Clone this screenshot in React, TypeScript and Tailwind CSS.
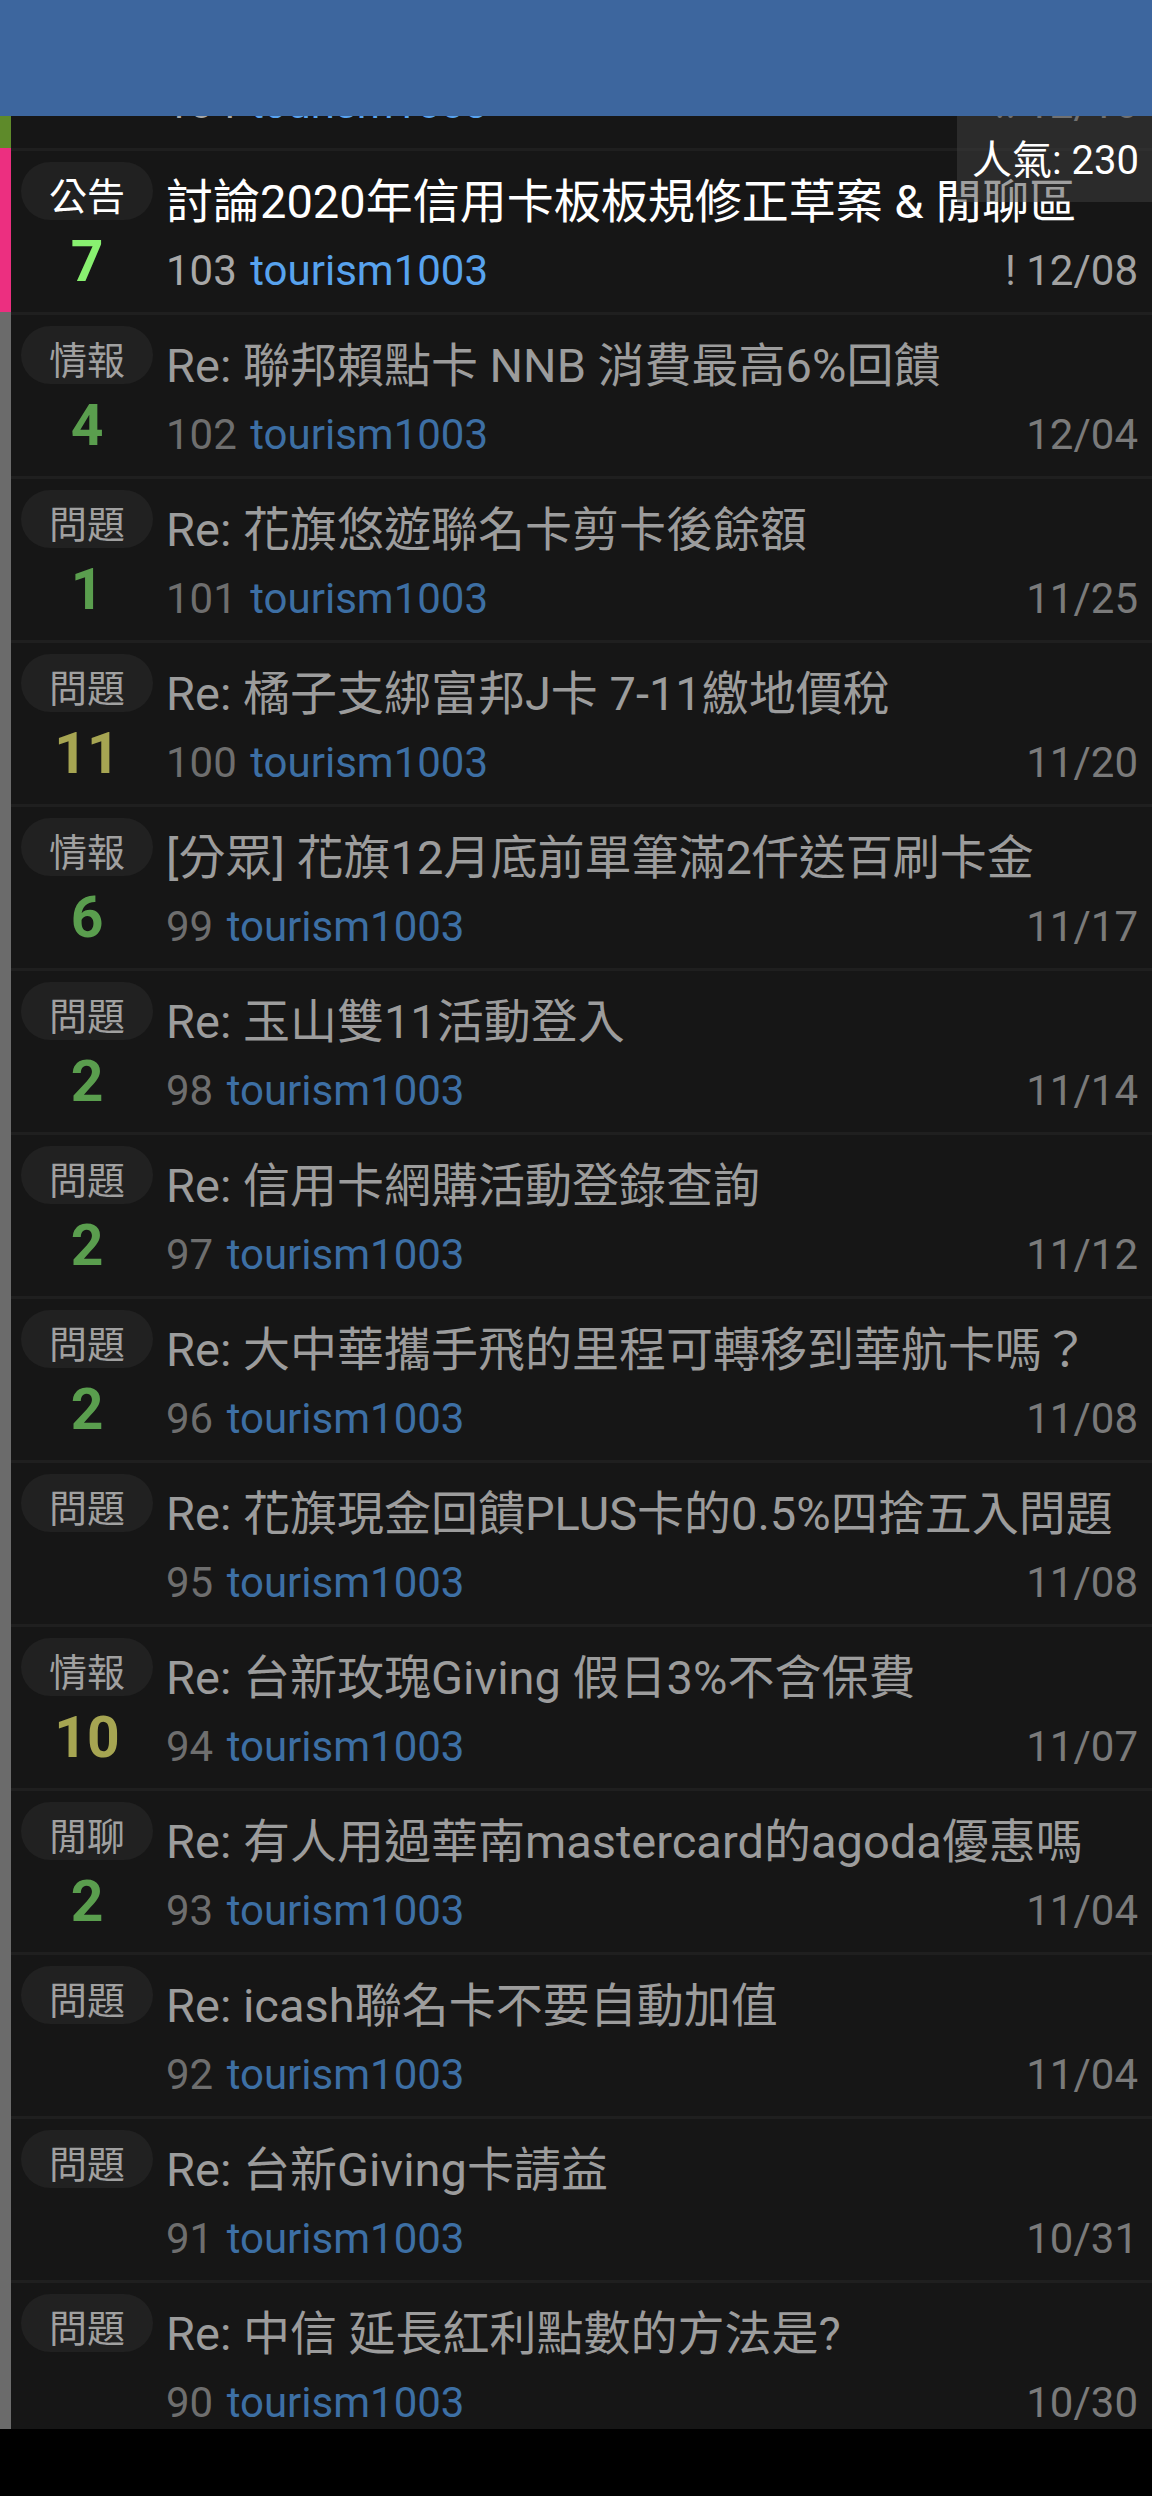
type Post = {
  tag?: string;
  count?: string;
  countColor?: string;
  title: string;
  no: string;
  date: string;
  unread?: boolean;
  strip: string;
};

const posts: Post[] = [
  { tag: "公告", count: "7", countColor: "text-[#88f070]", title: "討論2020年信用卡板板規修正草案 & 閒聊區", no: "103", date: "! 12/08", unread: true, strip: "bg-[#ec2f80]" },
  { tag: "情報", count: "4", countColor: "text-[#5a9e4e]", title: "Re: 聯邦賴點卡 NNB 消費最高6%回饋", no: "102", date: "12/04", strip: "bg-[#6b6b6b]" },
  { tag: "問題", count: "1", countColor: "text-[#5a9e4e]", title: "Re: 花旗悠遊聯名卡剪卡後餘額", no: "101", date: "11/25", strip: "bg-[#6b6b6b]" },
  { tag: "問題", count: "11", countColor: "text-[#a6a552]", title: "Re: 橘子支綁富邦J卡 7-11繳地價稅", no: "100", date: "11/20", strip: "bg-[#6b6b6b]" },
  { tag: "情報", count: "6", countColor: "text-[#5a9e4e]", title: "[分眾] 花旗12月底前單筆滿2仟送百刷卡金", no: "99", date: "11/17", strip: "bg-[#6b6b6b]" },
  { tag: "問題", count: "2", countColor: "text-[#5a9e4e]", title: "Re: 玉山雙11活動登入", no: "98", date: "11/14", strip: "bg-[#6b6b6b]" },
  { tag: "問題", count: "2", countColor: "text-[#5a9e4e]", title: "Re: 信用卡網購活動登錄查詢", no: "97", date: "11/12", strip: "bg-[#6b6b6b]" },
  { tag: "問題", count: "2", countColor: "text-[#5a9e4e]", title: "Re: 大中華攜手飛的里程可轉移到華航卡嗎？", no: "96", date: "11/08", strip: "bg-[#6b6b6b]" },
  { tag: "問題", title: "Re: 花旗現金回饋PLUS卡的0.5%四捨五入問題", no: "95", date: "11/08", strip: "bg-[#6b6b6b]" },
  { tag: "情報", count: "10", countColor: "text-[#a6a552]", title: "Re: 台新玫瑰Giving 假日3%不含保費", no: "94", date: "11/07", strip: "bg-[#6b6b6b]" },
  { tag: "閒聊", count: "2", countColor: "text-[#5a9e4e]", title: "Re: 有人用過華南mastercard的agoda優惠嗎", no: "93", date: "11/04", strip: "bg-[#6b6b6b]" },
  { tag: "問題", title: "Re: icash聯名卡不要自動加值", no: "92", date: "11/04", strip: "bg-[#6b6b6b]" },
  { tag: "問題", title: "Re: 台新Giving卡請益", no: "91", date: "10/31", strip: "bg-[#6b6b6b]" },
  { tag: "問題", title: "Re: 中信 延長紅利點數的方法是?", no: "90", date: "10/30", strip: "bg-[#6b6b6b]" },
];

function Row({ post, first }: { post: Post; first?: boolean }) {
  return (
    <div className="flex h-[164px] shrink-0">
      <div className={`w-[11px] shrink-0 ${post.strip}`} />
      <div className={`flex flex-1 min-w-0 ${first ? "" : "border-t-[3px] border-[#1f1f1f]"}`}>
        {/* tag + push count */}
        <div className="flex w-[155px] shrink-0 flex-col items-center pl-[10px] pr-[13px] pt-[11px]">
          {post.tag && (
            <div className="flex h-[58px] w-[132px] justify-center rounded-full bg-[#212121] pt-[12px]">
              <span className={`text-[38px] leading-[46px] ${post.unread ? "text-white" : "text-[#a0a0a0]"}`}>
                {post.tag}
              </span>
            </div>
          )}
          {post.count && (
            <div className={`mt-[13px] text-[57px] font-bold leading-[57px] ${post.countColor}`}>
              {post.count}
            </div>
          )}
        </div>

        {/* title + meta */}
        <div className="flex min-w-0 flex-1 flex-col pr-[14px] pt-[23px]">
          <div
            className={`overflow-hidden whitespace-nowrap text-[47px] leading-[56px] ${
              post.unread ? "text-white" : "text-[#9c9c9c]"
            }`}
          >
            {post.title}
          </div>
          <div className="mt-[17px] flex items-baseline justify-between text-[42px] leading-[48px]">
            <div className="whitespace-nowrap">
              <span className={post.unread ? "text-[#a8a8a8]" : "text-[#6e6e6e]"}>{post.no}</span>{" "}
              <span className={`ml-[3px] ${post.unread ? "text-[#58a3ee]" : "text-[#3d6fa4]"}`}>tourism1003</span>
            </div>
            <div className={`whitespace-nowrap ${post.unread ? "text-[#a2a2a2]" : "text-[#7a7a7a]"}`}>
              {post.date}
            </div>
          </div>
        </div>
      </div>
    </div>
  );
}

export default function App() {
  return (
    <div className="relative flex h-[2496px] w-[1152px] flex-col overflow-hidden bg-black font-[Roboto,'Noto_Sans_CJK_TC',sans-serif]">
      {/* toolbar */}
      <div className="h-[116px] shrink-0 bg-[#3d669e]" />

      {/* list */}
      <div className="flex h-[2313px] shrink-0 flex-col overflow-hidden bg-[#161616]">
        {/* row scrolled mostly out of view */}
        <div className="flex h-[32px] shrink-0 flex-col justify-end overflow-hidden">
          <Row
            first
            post={{ title: "Re: 信用卡", no: "104", date: "!! 12/16", unread: true, strip: "bg-[#5e8a2a]" }}
          />
        </div>
        {posts.map((p, i) => (
          <Row key={i} post={p} />
        ))}
      </div>

      {/* popularity toast */}
      <div className="absolute right-0 top-[116px] h-[86px] w-[195px] bg-[rgba(64,64,64,0.5)] pl-[15px] pt-[21px]">
        <span className="whitespace-nowrap text-[40px] leading-[48px] text-white">人氣: 230</span>
      </div>
    </div>
  );
}
